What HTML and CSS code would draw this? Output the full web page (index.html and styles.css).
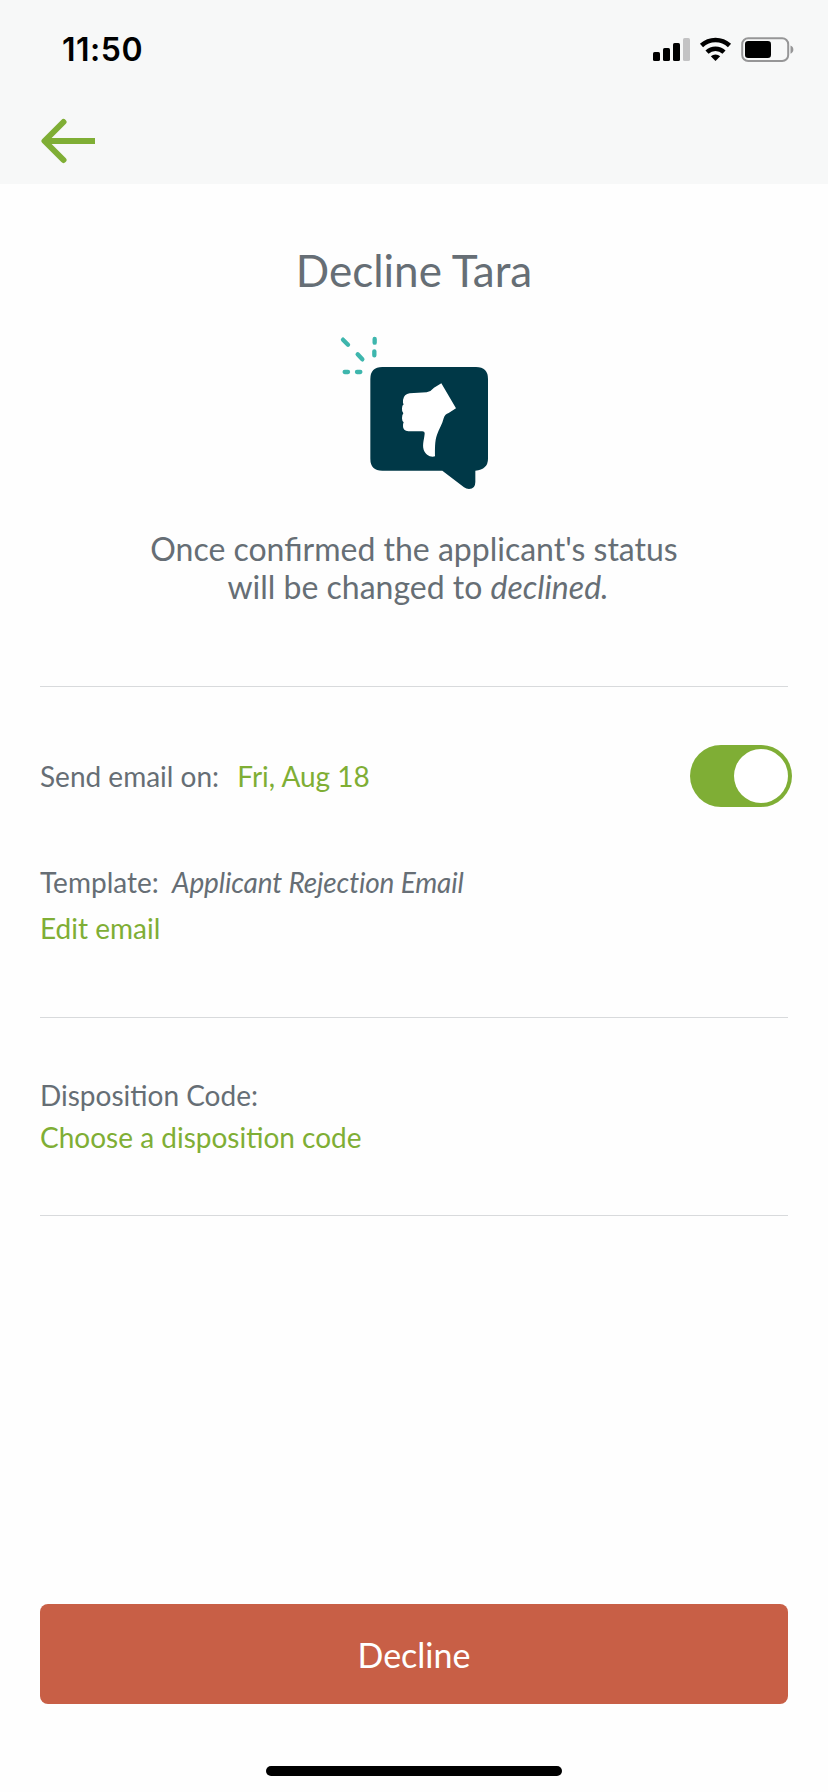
FILE: index.html
```html
<!DOCTYPE html>
<html lang="en">
  <head>
    <title>Decline Tara</title>
    <meta charset="UTF-8" />
    <meta name="viewport" content="width=device-width, initial-scale=1.0" />
    <link rel="stylesheet" href="styles.css">
  </head>
  <body>
    <header class="header">
      <div class="status-bar">
        <span class="time">11:50</span>
        <svg class="status-icons" viewBox="0 0 142 26" aria-hidden="true">
          <rect x="0" y="15" width="7" height="9" rx="1.6" />
          <rect x="10" y="11" width="7" height="13" rx="1.6" />
          <rect x="20" y="6" width="7" height="18" rx="1.6" />
          <rect x="30" y="1" width="7" height="23" rx="1.6" fill="#c3c3c4" />
          <g fill="none" stroke="#000" stroke-width="4.6">
            <path d="M48.5 8.5a20.5 20.5 0 0 1 28 0" />
            <path d="M54 15.1a12.6 12.6 0 0 1 17 0" />
          </g>
          <path d="M57.8 19.3a7 7 0 0 1 9.4 0L62.5 24z" />
          <rect x="89.2" y="1.2" width="46" height="22.8" rx="6" fill="none" stroke="#969697" stroke-width="2" />
          <rect x="92" y="4" width="26" height="17" rx="3.2" />
          <path d="M137.5 8.5c3.8 1.2 3.8 7 0 8.2z" fill="#969697" />
        </svg>
      </div>
      <a href="#" class="back" aria-label="Back">
        <svg width="56" height="46" viewBox="0 0 56 46">
          <path d="M23.5 4 4.5 23l19 19" fill="none" stroke="#7fae35" stroke-width="6" stroke-linecap="round" stroke-linejoin="round" />
          <path d="M5 23h50" fill="none" stroke="#7fae35" stroke-width="6" />
        </svg>
      </a>
    </header>

    <main class="content">
      <section class="intro">
        <h1>Decline Tara</h1>
        <svg class="intro-icon" viewBox="0 0 564 540" aria-hidden="true">
          <g stroke="#3eb6ad" stroke-width="13" stroke-linecap="round">
            <path d="M69 59l15 15M113 103l14 15M164 57v11M163 94v12M74 156h10M111 156h10" />
          </g>
          <path fill="#003847" d="M187 141H468Q504 141 504 177V416Q504 448 466 452V486Q466 507 447 507Q439 507 432 502L367 452H187Q151 452 151 416V177Q151 141 187 141z" />
          <path fill="#fff" d="M364 190L408 265L386 279Q375 282 371 295C367 313 357 327 351 344C344 363 345 387 345 409C330 413 316 403 311 389C306 373 314 353 314 339Q314 334 307 334H265Q249 333 249 319Q248 313 251 307Q246 303 246 295Q246 284 250 280Q245 275 246 265Q246 256 251 253Q248 249 249 240Q252 222 269 220L320 217Q332 215 342 203z" />
        </svg>
        <p>
          Once confirmed the applicant's status
          <br />
          <span class="status-line">will be changed to <em>declined.</em></span>
        </p>
      </section>

      <section class="email">
        <div class="email-row">
          <div>Send email on: <a href="#" class="date">Fri, Aug 18</a></div>
          <button class="toggle" type="button" role="switch" aria-checked="true" aria-label="Send email">
            <span class="knob"></span>
          </button>
        </div>
        <div class="template">Template: <em>Applicant Rejection Email</em></div>
        <a href="#">Edit email</a>
      </section>

      <section class="disposition">
        <div>Disposition Code:</div>
        <a href="#">Choose a disposition code</a>
      </section>
    </main>

    <footer class="footer">
      <button class="decline-btn" type="button">Decline</button>
      <div class="home-indicator"></div>
    </footer>
  </body>
</html>
```

FILE: styles.css
```css
* {
  box-sizing: border-box;
}

body {
  margin: 0;
  height: 1792px;
  display: flex;
  flex-direction: column;
  background-color: #fefefe;
  color: #666e75;
  font-family: Lato, "Liberation Sans", sans-serif;
  font-size: 28px;
  line-height: 34px;
}

a {
  color: #7fae35;
  text-decoration: none;
}

button {
  border: 0;
  font-family: inherit;
}

.header {
  height: 184px;
  background-color: #f7f8f8;
}

.status-bar {
  display: flex;
  justify-content: space-between;
  align-items: center;
  height: 100px;
  padding: 0 33px 0 62px;
}

.time {
  color: #000;
  font-family: Inter, sans-serif;
  font-size: 32px;
  font-weight: 600;
  letter-spacing: 0.5px;
}

.status-icons {
  width: 142px;
  height: 26px;
}

.back {
  display: block;
  width: 56px;
  height: 46px;
  margin: 18px 0 0 40px;
}

.back svg {
  display: block;
}

.content {
  flex: 1;
  padding: 0 40px;
}

.intro {
  display: flex;
  flex-direction: column;
  align-items: center;
  padding: 60px 0 80px;
  border-bottom: 1px solid #d8dadc;
  text-align: center;
}

.intro h1 {
  margin: 0;
  font-size: 44px;
  font-weight: 400;
  line-height: 52px;
}

.intro-icon {
  width: 188px;
  height: 180px;
  margin: 24px 0 30px;
}

.intro p {
  margin: 0;
  font-size: 32px;
  line-height: 38px;
}

.status-line {
  padding-left: 8px;
}

.email {
  padding: 58px 0 72px;
  border-bottom: 1px solid #d8dadc;
}

.email > a,
.disposition > a {
  display: block;
}

.email-row {
  display: flex;
  justify-content: space-between;
  align-items: center;
  margin-right: -4px;
}

.date {
  margin-left: 11px;
}

.toggle {
  display: flex;
  justify-content: flex-end;
  width: 102px;
  height: 62px;
  padding: 4px;
  border-radius: 31px;
  background-color: #7fae35;
}

.knob {
  width: 54px;
  height: 54px;
  border-radius: 50%;
  background-color: #fff;
}

.template {
  margin: 58px 0 12px;
}

.template em {
  margin-left: 6px;
  letter-spacing: -0.14px;
}

.disposition {
  padding: 60px 0 61px;
  border-bottom: 1px solid #d8dadc;
}

.disposition > a {
  margin-top: 8px;
}

.footer {
  display: flex;
  flex-direction: column;
  align-items: center;
  padding: 0 40px 16px;
}

.decline-btn {
  width: 100%;
  height: 100px;
  border-radius: 8px;
  background-color: #c85f46;
  color: #fff;
  font-size: 34px;
}

.home-indicator {
  width: 296px;
  height: 10px;
  margin-top: 62px;
  border-radius: 5px;
  background-color: #000;
}
```
